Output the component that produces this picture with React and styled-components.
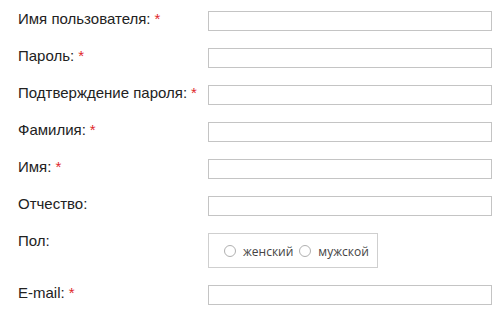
import styled, { createGlobalStyle } from 'styled-components';

const GlobalStyle = createGlobalStyle`
  body {
    margin: 0;
    background: #fff;
    font-family: "Liberation Sans", Arial, sans-serif;
  }
`;

const fields = [
  { label: 'Имя пользователя:', required: true },
  { label: 'Пароль:', required: true, type: 'password' },
  { label: 'Подтверждение пароля:', required: true, type: 'password' },
  { label: 'Фамилия:', required: true },
  { label: 'Имя:', required: true },
  { label: 'Отчество:' },
];

export default function App() {
  return (
    <>
      <GlobalStyle />
      <Form>
        {fields.map((f) => (
          <Row key={f.label}>
            <Label>
              {f.label}
              {f.required && <Star>*</Star>}
            </Label>
            <Input type={f.type || 'text'} />
          </Row>
        ))}

        <Row>
          <Label>Пол:</Label>
          <RadioBox>
            <RadioLabel>
              <Radio type='radio' name='sex' />
              женский
            </RadioLabel>
            <RadioLabel>
              <Radio type='radio' name='sex' />
              мужской
            </RadioLabel>
          </RadioBox>
        </Row>

        <Row>
          <Label>
            E-mail:<Star>*</Star>
          </Label>
          <Input type='email' />
        </Row>
      </Form>
    </>
  );
}

const Form = styled.form`
  display: flex;
  flex-direction: column;
  gap: 17px;
  padding: 11px 8px 0 18px;
`;

const Row = styled.div`
  display: grid;
  grid-template-columns: 190px 284px;
  align-items: start;
`;

const Label = styled.label`
  font-size: 15px;
  line-height: 16px;
  color: #222;
  white-space: nowrap;
`;

const Star = styled.span`
  color: #e0272b;
  margin-left: 4px;
`;

const Input = styled.input`
  box-sizing: border-box;
  width: 284px;
  height: 20px;
  margin: 0;
  padding: 0 4px;
  border: 1px solid #c4c4c4;
  border-radius: 0;
  outline: none;
  background: #fff;
`;

const RadioBox = styled.div`
  box-sizing: border-box;
  display: flex;
  align-items: center;
  gap: 6px;
  width: 170px;
  height: 35px;
  padding: 1px 0 0 15px;
  border: 1px solid #cfcfcf;
`;

const RadioLabel = styled.label`
  display: flex;
  align-items: center;
  gap: 7px;
  font-family: "Open Sans", sans-serif;
  font-size: 12px;
  color: #444;
`;

const Radio = styled.input`
  appearance: none;
  box-sizing: border-box;
  width: 12px;
  height: 12px;
  margin: 0;
  border: 1px solid #b0b0b0;
  border-radius: 50%;
  background: #fff;
`;
